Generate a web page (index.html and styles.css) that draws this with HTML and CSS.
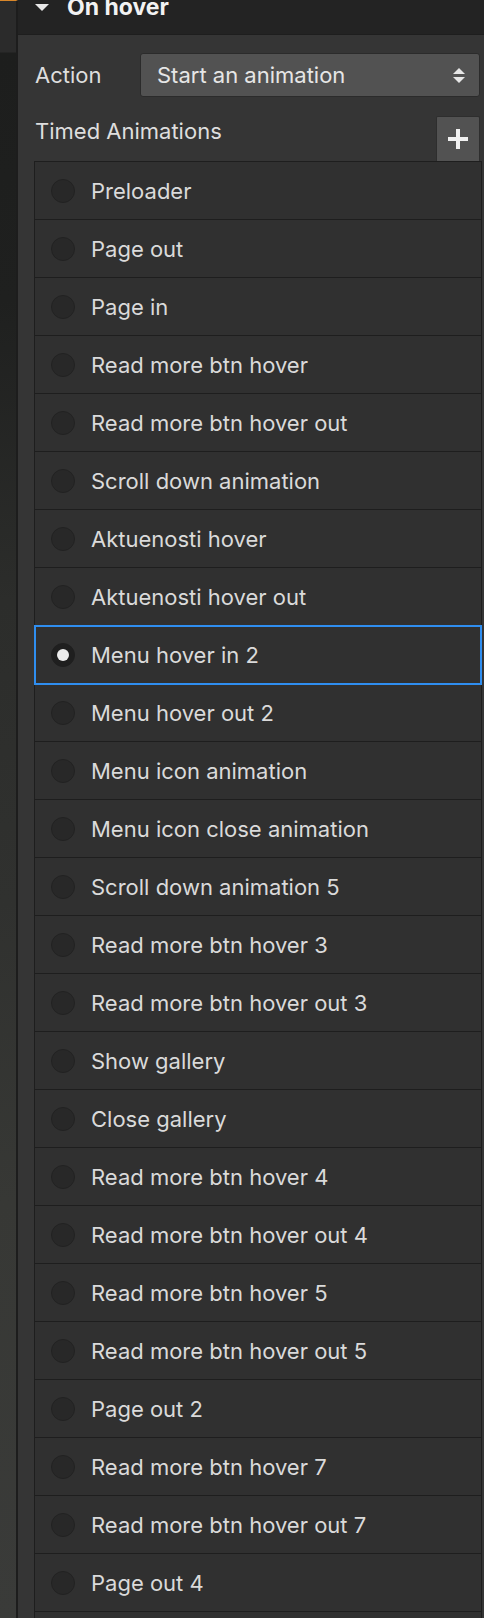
FILE: index.html
```html
<!DOCTYPE html>
<html>
<head>
<meta charset="utf-8">
<link rel="stylesheet" href="styles.css">
</head>
<body>
<div class="app">
  <div class="backdrop"></div>
  <div class="panel">
    <div class="panel-head">
      <span class="caret"></span>
      <span class="panel-title">On hover</span>
    </div>
    <div class="panel-body">
      <div class="field">
        <span class="label">Action</span>
        <div class="select">
          <span>Start an animation</span>
          <span class="arrows"><i class="up"></i><i class="down"></i></span>
        </div>
      </div>
      <div class="list-head">
        <span class="label">Timed Animations</span>
        <button class="add"><i class="plus-h"></i><i class="plus-v"></i></button>
      </div>
      <ul class="list">
        <li class="row"><span class="radio"></span>Preloader</li>
        <li class="row"><span class="radio"></span>Page out</li>
        <li class="row"><span class="radio"></span>Page in</li>
        <li class="row"><span class="radio"></span>Read more btn hover</li>
        <li class="row"><span class="radio"></span>Read more btn hover out</li>
        <li class="row"><span class="radio"></span>Scroll down animation</li>
        <li class="row"><span class="radio"></span>Aktuenosti hover</li>
        <li class="row"><span class="radio"></span>Aktuenosti hover out</li>
        <li class="row selected"><span class="radio on"></span>Menu hover in 2</li>
        <li class="row"><span class="radio"></span>Menu hover out 2</li>
        <li class="row"><span class="radio"></span>Menu icon animation</li>
        <li class="row"><span class="radio"></span>Menu icon close animation</li>
        <li class="row"><span class="radio"></span>Scroll down animation 5</li>
        <li class="row"><span class="radio"></span>Read more btn hover 3</li>
        <li class="row"><span class="radio"></span>Read more btn hover out 3</li>
        <li class="row"><span class="radio"></span>Show gallery</li>
        <li class="row"><span class="radio"></span>Close gallery</li>
        <li class="row"><span class="radio"></span>Read more btn hover 4</li>
        <li class="row"><span class="radio"></span>Read more btn hover out 4</li>
        <li class="row"><span class="radio"></span>Read more btn hover 5</li>
        <li class="row"><span class="radio"></span>Read more btn hover out 5</li>
        <li class="row"><span class="radio"></span>Page out 2</li>
        <li class="row"><span class="radio"></span>Read more btn hover 7</li>
        <li class="row"><span class="radio"></span>Read more btn hover out 7</li>
        <li class="row"><span class="radio"></span>Page out 4</li>
        <li class="row"><span class="radio"></span></li>
      </ul>
    </div>
  </div>
</div>
</body>
</html>
```

FILE: styles.css
```css
html, body {
  margin: 0;
  padding: 0;
  height: 1618px;
  overflow: hidden;
  background: #353535;
}
body {
  font-family: Inter, "Noto Sans", sans-serif;
  color: #dcdcdc;
}
.app {
  display: flex;
  height: 1618px;
}
.backdrop {
  width: 16px;
  flex: none;
  border-top: 1px solid #d9872a;
  background:
    linear-gradient(#2b2b2b 0, #2b2b2b 51px, #1d1e1d 52px, #1f201f 300px, #2c2d2b 600px, #30312f 900px, #373835 1200px, #3a3b39 1618px);
  border-right: 2px solid #1d1d1d;
}
.panel {
  flex: 1;
  min-width: 0;
  display: flex;
  flex-direction: column;
  background: #353535;
}
.panel-head {
  height: 35px;
  flex: none;
  display: flex;
  align-items: flex-start;
  background: #232323;
  border-bottom: 1px solid #1e1e1e;
  box-sizing: border-box;
  padding-left: 17px;
  overflow: hidden;
}
.caret {
  width: 0;
  height: 0;
  margin-top: 4px;
  border-left: 7px solid transparent;
  border-right: 7px solid transparent;
  border-top: 7px solid #e8e8e8;
}
.panel-title {
  margin-left: 18px;
  margin-top: -5px;
  font-size: 23px;
  line-height: 24px;
  font-weight: 700;
  color: #f2f2f2;
}
.panel-body {
  padding: 18px 2px 0 16px;
  display: flex;
  flex-direction: column;
}
.field {
  display: flex;
  align-items: center;
  height: 44px;
  margin-right: 2px;
}
.label {
  font-size: 22px;
  color: #dedede;
  padding-left: 1px;
}
.field .label {
  width: 105px;
  flex: none;
}
.select {
  flex: 1;
  height: 44px;
  box-sizing: border-box;
  background: #525252;
  border: 1px solid #2b2b2b;
  border-radius: 3px;
  display: flex;
  align-items: center;
  justify-content: space-between;
  padding: 0 14px 0 16px;
  font-size: 22px;
  color: #e6e6e6;
}
.arrows {
  display: flex;
  flex-direction: column;
  gap: 3px;
}
.arrows i {
  display: block;
  width: 0;
  height: 0;
  border-left: 6px solid transparent;
  border-right: 6px solid transparent;
}
.arrows .up { border-bottom: 6px solid #e6e6e6; }
.arrows .down { border-top: 6px solid #e6e6e6; }
.list-head {
  display: flex;
  justify-content: space-between;
  align-items: flex-start;
  margin-top: 19px;
  margin-right: 2px;
  height: 45px;
}
.list-head .label {
  margin-top: 2px;
}
.add {
  width: 44px;
  height: 45px;
  padding: 0;
  border: 1px solid #2e2e2e;
  border-bottom: none;
  border-radius: 2px 2px 0 0;
  background: #525252;
  position: relative;
  box-sizing: border-box;
}
.plus-h, .plus-v {
  position: absolute;
  background: #f0f0f0;
}
.plus-h { width: 20px; height: 4px; left: 11px; top: 20px; }
.plus-v { width: 4px; height: 20px; left: 19px; top: 12px; }
.list {
  list-style: none;
  margin: 0;
  padding: 0;
  border-left: 1px solid #1e1e1e;
  border-right: 1px solid #1e1e1e;
  border-bottom: 1px solid #1e1e1e;
}
.row {
  position: relative;
  height: 58px;
  box-sizing: border-box;
  border-top: 1px solid #1e1e1e;
  background: #303030;
  display: flex;
  align-items: center;
  padding-left: 16px;
  font-size: 22px;
  color: #dadada;
}
.radio {
  width: 24px;
  height: 24px;
  box-sizing: border-box;
  border-radius: 50%;
  background: #282828;
  border: 1px solid #222;
  margin-right: 16px;
  flex: none;
  display: flex;
  align-items: center;
  justify-content: center;
}
.radio.on {
  background: #1f1f1f;
  border-color: #1f1f1f;
}
.radio.on::before {
  content: "";
  width: 12px;
  height: 12px;
  border-radius: 50%;
  background: #ececec;
}
.row.selected::after {
  content: "";
  position: absolute;
  top: -1px;
  left: -1px;
  right: -1px;
  bottom: -2px;
  border: 2px solid #2f8ef0;
  z-index: 1;
}
```
